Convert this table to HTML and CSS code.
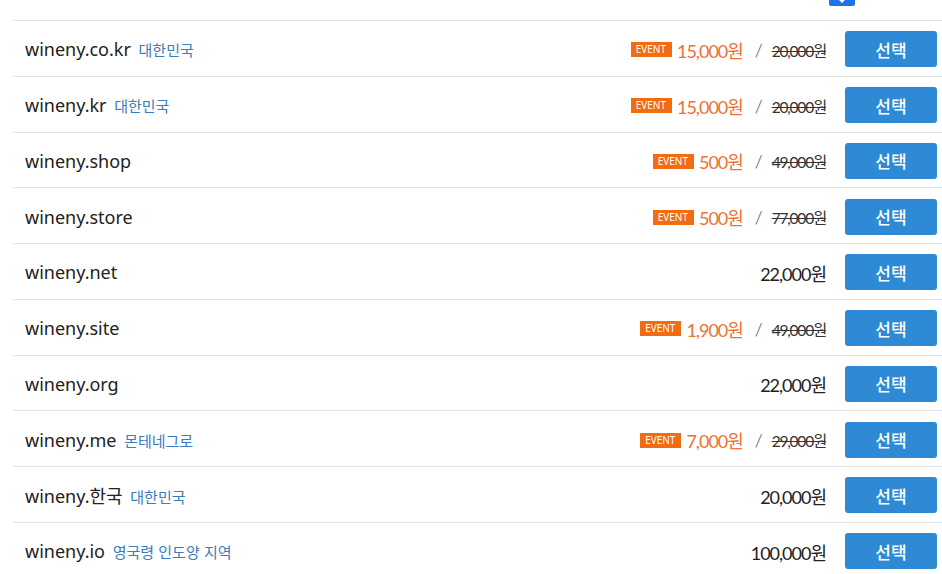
FILE: index.html
```html
<!DOCTYPE html>
<html lang="ko">
<head>
<meta charset="UTF-8" />
<meta name="viewport" content="width=device-width, initial-scale=1" />
<title>도메인 검색 결과</title>
<link rel="stylesheet" href="styles.css">
</head>
<body>

<div class="list-head">
  <span class="check-all"></span>
</div>

<ul class="domain-list">
  <li class="domain-row">
    <div class="domain-name">wineny.co.kr <span class="country">대한민국</span></div>
    <div class="price">
      <span class="badge">EVENT</span>
      <span class="sale">15,000원</span>
      <span class="slash">/</span>
      <del class="orig">20,000원</del>
    </div>
    <button class="select-btn">선택</button>
  </li>
  <li class="domain-row">
    <div class="domain-name">wineny.kr <span class="country">대한민국</span></div>
    <div class="price">
      <span class="badge">EVENT</span>
      <span class="sale">15,000원</span>
      <span class="slash">/</span>
      <del class="orig">20,000원</del>
    </div>
    <button class="select-btn">선택</button>
  </li>
  <li class="domain-row">
    <div class="domain-name">wineny.shop</div>
    <div class="price">
      <span class="badge">EVENT</span>
      <span class="sale">500원</span>
      <span class="slash">/</span>
      <del class="orig">49,000원</del>
    </div>
    <button class="select-btn">선택</button>
  </li>
  <li class="domain-row">
    <div class="domain-name">wineny.store</div>
    <div class="price">
      <span class="badge">EVENT</span>
      <span class="sale">500원</span>
      <span class="slash">/</span>
      <del class="orig">77,000원</del>
    </div>
    <button class="select-btn">선택</button>
  </li>
  <li class="domain-row">
    <div class="domain-name">wineny.net</div>
    <div class="price">
      <span class="regular">22,000원</span>
    </div>
    <button class="select-btn">선택</button>
  </li>
  <li class="domain-row">
    <div class="domain-name">wineny.site</div>
    <div class="price">
      <span class="badge">EVENT</span>
      <span class="sale">1,900원</span>
      <span class="slash">/</span>
      <del class="orig">49,000원</del>
    </div>
    <button class="select-btn">선택</button>
  </li>
  <li class="domain-row">
    <div class="domain-name">wineny.org</div>
    <div class="price">
      <span class="regular">22,000원</span>
    </div>
    <button class="select-btn">선택</button>
  </li>
  <li class="domain-row">
    <div class="domain-name">wineny.me <span class="country">몬테네그로</span></div>
    <div class="price">
      <span class="badge">EVENT</span>
      <span class="sale">7,000원</span>
      <span class="slash">/</span>
      <del class="orig">29,000원</del>
    </div>
    <button class="select-btn">선택</button>
  </li>
  <li class="domain-row">
    <div class="domain-name">wineny.한국 <span class="country">대한민국</span></div>
    <div class="price">
      <span class="regular">20,000원</span>
    </div>
    <button class="select-btn">선택</button>
  </li>
  <li class="domain-row">
    <div class="domain-name">wineny.io <span class="country">영국령 인도양 지역</span></div>
    <div class="price">
      <span class="regular">100,000원</span>
    </div>
    <button class="select-btn">선택</button>
  </li>
</ul>

</body>
</html>
```

FILE: styles.css
```css
body {
  margin: 0;
  background: #fff;
  color: #222;
  font-family: 'Noto Sans', 'Noto Sans CJK KR', sans-serif;
  overflow: hidden;
}
.list-head {
  height: 20px;
  margin-left: 13px;
  border-bottom: 1px solid #e4e4e4;
  display: flex;
  justify-content: flex-end;
  padding-right: 87px;
}
.check-all {
  width: 26px;
  height: 6px;
  background: #1a73e8;
  border-radius: 0 0 2px 2px;
  position: relative;
}
.check-all::after {
  content: "";
  position: absolute;
  left: 10px;
  top: 0;
  border-left: 3px solid transparent;
  border-right: 3px solid transparent;
  border-top: 3px solid #fff;
}
.domain-list {
  list-style: none;
  margin: 0 0 0 13px;
  padding: 0;
}
.domain-row {
  display: flex;
  align-items: center;
  height: 54.75px;
  padding: 0 5px 0 12px;
  border-bottom: 1px solid #e4e4e4;
}
.domain-name {
  flex: 1;
  font-size: 18px;
  color: #222;
  padding-top: 2px;
}
.country {
  font-family: 'Noto Sans CJK KR', sans-serif;
  font-size: 15px;
  color: #3a7cbd;
  margin-left: 3px;
}
.price {
  display: flex;
  align-items: center;
  padding-top: 3px;
  font-family: Lato, 'Noto Sans CJK KR', sans-serif;
  letter-spacing: -1px;
}
.badge {
  background: #f26c12;
  color: #fff;
  font-family: 'Noto Sans', sans-serif;
  font-size: 10px;
  letter-spacing: 0;
  line-height: 15px;
  padding: 0 6px 0 5px;
  margin-right: 5px;
}
.sale {
  color: #f07132;
  font-size: 18px;
}
.slash {
  color: #444;
  font-size: 18px;
  font-weight: 300;
  margin: 0 10px 0 12px;
}
.orig {
  color: #333;
  font-size: 15.5px;
  letter-spacing: -1.2px;
}
.regular {
  color: #222;
  font-size: 18px;
}
.select-btn {
  width: 92px;
  height: 36px;
  margin-left: 19px;
  margin-top: 2px;
  border: none;
  border-radius: 3px;
  background: #2f8ad6;
  color: #fff;
  font-family: 'Noto Sans CJK KR', sans-serif;
  font-size: 17px;
  font-weight: 500;
  cursor: pointer;
}
```
